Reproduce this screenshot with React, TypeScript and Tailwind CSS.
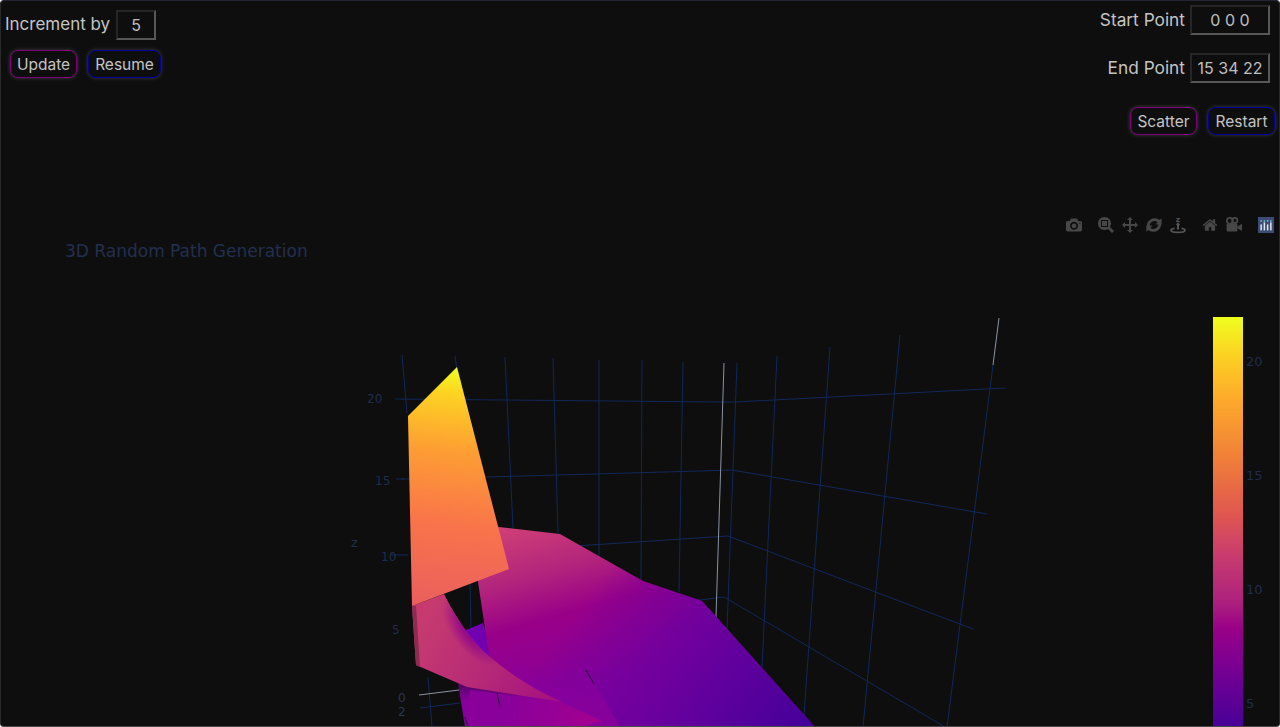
import React from "react";

const GRID = "#11285a";
const TICK = "#1f2d4c";
const ICON = "#474747";

function Field({ value, width }: { value: string; width: string }) {
  return (
    <div
      className={`${width} h-[30px] pb-[1px] flex items-center justify-center border-2 border-t-[#262626] border-l-[#262626] border-r-[#585858] border-b-[#585858] text-[16px] text-[#bfbfbf]`}
    >
      {value}
    </div>
  );
}

function GlowButton({ label, tone, width }: { label: string; tone: "purple" | "blue"; width: string }) {
  const border = tone === "purple" ? "border-[#800080]" : "border-[#0000a0]";
  return (
    <button
      className={`${width} h-[28px] pt-[2px] rounded-[8px] border ${border} bg-[#0e0e0e] text-[15.5px] leading-none text-[#c4c4c4] shadow-[0_0_4px_rgba(255,255,255,0.2)]`}
    >
      {label}
    </button>
  );
}

function Modebar() {
  return (
    <div className="absolute right-[5px] top-[4px] flex items-center h-[18px]">
      <svg width="16" height="16" viewBox="0 0 1000 1000" className="mr-[16px]">
        <path
          fill={ICON}
          transform="matrix(1 0 0 -1 0 850)"
          d="m500 450c-83 0-150-67-150-150 0-83 67-150 150-150 83 0 150 67 150 150 0 83-67 150-150 150z m400 150h-120c-16 0-34 13-39 29l-31 93c-6 15-23 28-40 28h-340c-16 0-34-13-39-28l-31-94c-6-15-23-28-40-28h-120c-55 0-100-45-100-100v-450c0-55 45-100 100-100h800c55 0 100 45 100 100v450c0 55-45 100-100 100z m-400-550c-138 0-250 112-250 250 0 138 112 250 250 250 138 0 250-112 250-250 0-138-112-250-250-250z m365 380c-19 0-35 16-35 35 0 19 16 35 35 35 19 0 35-16 35-35 0-19-16-35-35-35z"
        />
      </svg>
      <svg width="16" height="16" viewBox="0 0 1000 1000" className="mr-[8px]">
        <path
          fill={ICON}
          transform="matrix(1 0 0 -1 0 850)"
          d="m1000-25l-250 251c40 63 63 138 63 218 0 224-182 406-407 406-224 0-406-182-406-406s183-406 407-406c80 0 155 22 218 62l250-250 125 125z m-812 250l0 438 437 0 0-438-437 0z m62 375l313 0 0-312-313 0 0 312z"
        />
      </svg>
      <svg width="16" height="16" viewBox="0 0 1000 1000" className="mr-[8px]">
        <path
          fill={ICON}
          transform="matrix(1 0 0 -1 0 850)"
          d="m1000 350l-187 188 0-125-250 0 0 250 125 0-188 187-187-187 125 0 0-250-250 0 0 125-188-188 186-187 0 125 252 0 0-250-125 0 187-188 188 188-125 0 0 250 250 0 0-126 187 188z"
        />
      </svg>
      <svg width="16" height="16" viewBox="0 0 16 16" className="mr-[8px]">
        <path fill={ICON} d="M1 11 C-0.2 6 3.5 1 9 1.2 C11 1.3 12.4 2 13.4 3 L15.6 1.2 L15.6 7.4 L9.6 7.4 L11.6 5.2 C10.2 3.8 8 3.6 6 4.8 C4 6 3.2 8.4 3.6 11 Z" />
        <path fill={ICON} d="M15 5 C16.2 10 12.5 15 7 14.8 C5 14.7 3.6 14 2.6 13 L0.4 14.8 L0.4 8.6 L6.4 8.6 L4.4 10.8 C5.8 12.2 8 12.4 10 11.2 C12 10 12.8 7.6 12.4 5 Z" />
      </svg>
      <svg width="16" height="18" viewBox="0 0 16 18" className="mr-[16px]">
        <text x="8" y="5.5" textAnchor="middle" fontSize="7.5" fontWeight="700" fill="#555555" fontFamily="'DejaVu Sans', sans-serif">
          z
        </text>
        <path fill="#555555" d="M8 6 L10.2 9 L9 9 L9 13.5 L7 13.5 L7 9 L5.8 9 Z" />
        <path fill="none" stroke="#555555" strokeWidth="1.6" d="M4.5 12.4 C1.8 12.9 0.8 13.6 1 14.5 C1.3 15.8 4.5 16.4 8 16.4 C11.5 16.4 14.7 15.8 15 14.5 C15.2 13.6 14.2 12.9 11.5 12.4" />
      </svg>
      <svg width="16" height="16" viewBox="0 0 928.6 1000" className="mr-[8px]">
        <path
          fill={ICON}
          transform="matrix(1 0 0 -1 0 850)"
          d="m786 296v-267q0-15-11-26t-25-10h-214v214h-143v-214h-214q-15 0-25 10t-11 26v267q0 1 0 2t0 2l321 264 321-264q1-1 1-4z m124 39l-34-41q-5-5-12-6h-2q-7 0-12 3l-386 322-386-322q-7-4-13-4-7 2-12 7l-35 41q-4 5-3 13t6 12l401 334q18 15 42 15t43-15l136-114v109q0 8 5 13t13 5h107q8 0 13-5t5-13v-227l122-102q5-5 6-12t-4-13z"
        />
      </svg>
      <svg width="16" height="16" viewBox="0 0 16 16" className="mr-[16px]">
        <circle cx="3.8" cy="3.8" r="3" fill="none" stroke={ICON} strokeWidth="1.8" />
        <circle cx="8.8" cy="3.4" r="2.6" fill="none" stroke={ICON} strokeWidth="1.8" />
        <rect x="0.6" y="6.4" width="10.8" height="8" rx="1" fill={ICON} />
        <path fill={ICON} d="M11.4 9.8 L16 6.8 L16 14 L11.4 11.2 Z" />
      </svg>
      <svg width="16" height="16" viewBox="0 0 16 16">
        <rect width="16" height="16" fill="#3c4c73" />
        <g fill="#dfe6ee">
          <rect x="2.4" y="7.4" width="1.5" height="6" />
          <rect x="5.6" y="5.4" width="1.5" height="8" />
          <rect x="8.9" y="7.4" width="1.5" height="6" />
          <rect x="12.1" y="5.4" width="1.5" height="8" />
        </g>
        <g fill="#6ec6d6">
          <rect x="2.4" y="3.2" width="1.5" height="1.5" />
          <rect x="5.6" y="3.2" width="1.5" height="1.5" />
          <rect x="8.9" y="3.2" width="1.5" height="1.5" />
          <rect x="12.1" y="3.2" width="1.5" height="1.5" />
        </g>
      </svg>
    </div>
  );
}

const gridLines = [
  "M395 399 L720 402 L735 402 L1005 388",
  "M402 479 L487 477 L700 471 L732 470 L987 514",
  "M575 546 L728 536 L973 629",
  "M640 604 L700 600 L724 597 L945 727",
  "M737 363 L727 630",
  "M777 356 L762 667",
  "M830 347 L804 715",
  "M900 335 L863 727",
  "M993 365 L947 727",
  "M402 355 L407 413",
  "M428 677 L432 727",
  "M455 356 L457 370",
  "M470 583 L471 628",
  "M505 357 L513 528",
  "M553 358 L558 533",
  "M599 360 L599 560",
  "M642 360 L641 580",
  "M683 362 L679 592",
  "M420 708 L460 703",
  "M391 555 L408 555",
  "M396 479 L404 479",
];

const MAIN_SHEET = "490,526 560,534 643,581 702,601 815,727 540,727 489,655 477,575";
const RIBBON = "M412 606 L444 594 C458 622 474 644 490 657 C515 678 540 692 562 702 L467 687 L416 665 Z";

function Chart() {
  return (
    <svg viewBox="0 212 1280 515" className="block w-[1280px] h-[515px]">
      <defs>
        <linearGradient id="bar" x1="0" y1="0" x2="0" y2="1">
          <stop offset="0" stopColor="#efff1e" />
          <stop offset="0.09" stopColor="#fcd322" />
          <stop offset="0.2" stopColor="#fdaa2b" />
          <stop offset="0.34" stopColor="#f08038" />
          <stop offset="0.48" stopColor="#e0574f" />
          <stop offset="0.58" stopColor="#c83c6e" />
          <stop offset="0.7" stopColor="#ab1f7e" />
          <stop offset="0.76" stopColor="#990088" />
          <stop offset="0.88" stopColor="#700094" />
          <stop offset="1" stopColor="#480096" />
        </linearGradient>
        <linearGradient id="top" gradientUnits="userSpaceOnUse" x1="450" y1="367" x2="425" y2="606">
          <stop offset="0" stopColor="#efff1e" />
          <stop offset="0.1" stopColor="#fdd522" />
          <stop offset="0.35" stopColor="#fd9d33" />
          <stop offset="0.65" stopColor="#f9744a" />
          <stop offset="1" stopColor="#ea5f5e" />
        </linearGradient>
        <linearGradient id="main" gradientUnits="userSpaceOnUse" x1="510" y1="525" x2="560" y2="700">
          <stop offset="0" stopColor="#cf4076" />
          <stop offset="0.3" stopColor="#b3257c" />
          <stop offset="0.55" stopColor="#990088" />
          <stop offset="1" stopColor="#88009a" />
        </linearGradient>
        <linearGradient id="shade" gradientUnits="userSpaceOnUse" x1="585" y1="600" x2="810" y2="770">
          <stop offset="0" stopColor="#6c009e" stopOpacity="0" />
          <stop offset="0.4" stopColor="#6c009e" stopOpacity="0.95" />
          <stop offset="1" stopColor="#3c009a" />
        </linearGradient>
        <linearGradient id="lowerFade" gradientUnits="userSpaceOnUse" x1="540" y1="662" x2="540" y2="700">
          <stop offset="0" stopColor="#86009c" stopOpacity="0" />
          <stop offset="1" stopColor="#86009c" />
        </linearGradient>
        <linearGradient id="tip" gradientUnits="userSpaceOnUse" x1="510" y1="700" x2="600" y2="722">
          <stop offset="0" stopColor="#8a009a" />
          <stop offset="1" stopColor="#a40090" />
        </linearGradient>
        <linearGradient id="ribbon" gradientUnits="userSpaceOnUse" x1="420" y1="630" x2="565" y2="705">
          <stop offset="0" stopColor="#c63a70" />
          <stop offset="0.5" stopColor="#b42878" />
          <stop offset="1" stopColor="#a20c80" />
        </linearGradient>
        <radialGradient id="fold" gradientUnits="userSpaceOnUse" cx="0" cy="0" r="1" gradientTransform="translate(472 630) rotate(53) scale(42 20)">
          <stop offset="0" stopColor="#8c008c" />
          <stop offset="0.35" stopColor="#8c008c" stopOpacity="0.8" />
          <stop offset="1" stopColor="#8c008c" stopOpacity="0" />
        </radialGradient>
      </defs>

      <text x="65" y="257" fontSize="17" fill="#22304f" fontFamily="'DejaVu Sans', sans-serif">
        3D Random Path Generation
      </text>

      <g fill="none" stroke={GRID} strokeWidth="1">
        {gridLines.map((d) => (
          <path key={d} d={d} />
        ))}
      </g>
      <g fill="none" stroke="#8b93a3" strokeWidth="1">
        <path d="M724 363 L716 617" />
        <path d="M999 318 L993 365" />
        <path d="M419 695 L459 690" />
      </g>

      <g fontSize="12" fill={TICK} fontFamily="'DejaVu Sans', sans-serif">
        <text x="367" y="403">20</text>
        <text x="375" y="485">15</text>
        <text x="381" y="561">10</text>
        <text x="392" y="634">5</text>
        <text x="351" y="547" fontSize="13">z</text>
        <text x="398" y="702" fill="#2a3550">0</text>
        <text x="398" y="716" fill="#2a3550">2</text>
      </g>

      <polygon points="466,630 483,623 500,680 470,680" fill="#7000b0" />
      <polygon points={MAIN_SHEET} fill="url(#main)" />
      <polygon points={MAIN_SHEET} fill="url(#shade)" />
      <polygon points="480,662 587,670 620,727 465,727 458,683" fill="url(#lowerFade)" />
      <polygon points="470,690 560,702 602,721 580,727 465,727" fill="url(#tip)" />
      <path d={RIBBON} fill="url(#ribbon)" />
      <path d={RIBBON} fill="url(#fold)" />
      <polygon points="412,606 416,665 420,667 416,606" fill="#8c2c50" />
      <polygon points="408,416 457,367 509,569 412,606" fill="url(#top)" />
      <g stroke="#3a1050" strokeWidth="1.2" fill="none">
        <path d="M586 670 L594 684" />
        <path d="M497 693 L500 707" />
        <path d="M465 717 L468 727" />
      </g>

      <rect x="1213" y="317" width="30" height="410" fill="url(#bar)" />
      <g fontSize="13" fill={TICK} fontFamily="'DejaVu Sans', sans-serif">
        <text x="1246" y="366">20</text>
        <text x="1246" y="480">15</text>
        <text x="1246" y="594">10</text>
        <text x="1246" y="708">5</text>
      </g>
    </svg>
  );
}

export default function App() {
  return (
    <div className="relative h-[727px] w-[1280px] overflow-hidden rounded-[4px] border-t border-l border-r border-b border-t-[#23233a] border-l-[#2a2a2a] border-r-[#2a2a2a] border-b-[#4a4a4a] bg-[#0e0e0e] font-['Inter',sans-serif] text-[#c4c4c4]">
      <div className="flex h-[211px] justify-between">
        <div className="flex flex-col items-start pl-[4px] pt-[9px]">
          <div className="flex items-center gap-[6px]">
            <span className="text-[17px]">Increment by</span>
            <Field value="5" width="w-[40px]" />
          </div>
          <div className="mt-[10px] ml-[5px] flex gap-[11px]">
            <GlowButton label="Update" tone="purple" width="w-[67px]" />
            <GlowButton label="Resume" tone="blue" width="w-[73px]" />
          </div>
        </div>
        <div className="flex flex-col items-end pr-[4px] pt-[4px]">
          <div className="flex items-center gap-[5px] pr-[5px]">
            <span className="text-[17.3px]">Start Point</span>
            <Field value="0 0 0" width="w-[80px]" />
          </div>
          <div className="mt-[18px] flex items-center gap-[5px] pr-[5px]">
            <span className="text-[17.3px]">End Point</span>
            <Field value="15 34 22" width="w-[80px]" />
          </div>
          <div className="mt-[24px] flex gap-[11px]">
            <GlowButton label="Scatter" tone="purple" width="w-[67px]" />
            <GlowButton label="Restart" tone="blue" width="w-[67px]" />
          </div>
        </div>
      </div>
      <div className="relative -ml-[1px]">
        <Modebar />
        <Chart />
      </div>
    </div>
  );
}
